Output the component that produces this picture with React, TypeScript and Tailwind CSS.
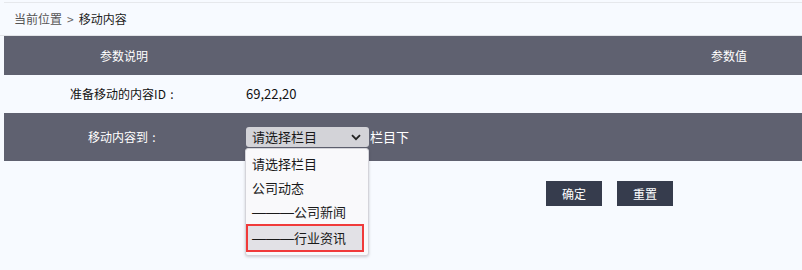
import React from "react";

const options = [
  { dash: "", label: "请选择栏目" },
  { dash: "", label: "公司动态" },
  { dash: "———", label: "公司新闻" },
  { dash: "———", label: "行业资讯" },
];

function Dash({ text }: { text: string }) {
  if (!text) return null;
  return (
    <span className="text-[14px]" style={{ fontFamily: '"Liberation Sans", sans-serif' }}>
      {text}
    </span>
  );
}

function Colon() {
  return <span className="inline-block w-[12px] text-center">:</span>;
}

function ColumnSelect() {
  return (
    <div className="relative">
      <div className="flex h-[20px] w-[123px] items-center justify-between rounded-[3px] bg-[#d3d3d8] pl-[6px] pr-[8px] text-[13px] text-[#1a1a1a]">
        <span>请选择栏目</span>
        <svg width="10" height="7" viewBox="0 0 10 7" fill="none">
          <path d="M1 1.2L5 5.2L9 1.2" stroke="#222" strokeWidth="1.8" />
        </svg>
      </div>
      {/* opened option list */}
      <div className="absolute left-[-1px] top-[21px] z-10 w-[124px] rounded-[3px] border border-[#d4d4da] bg-[#f9f9fb] py-[3px] shadow-[0_1px_3px_rgba(0,0,0,0.18)]">
        {options.map((opt, i) => (
          <div
            key={opt.label}
            className={
              i === 3
                ? "flex h-[28px] items-center border-2 border-[#f03a3a] bg-[#e2e1e6] pl-[4px] mr-[4px] text-[13px] text-[#1a1a1a]"
                : "flex h-[24px] items-center pl-[6px] text-[13px] text-[#1a1a1a]"
            }
          >
            <Dash text={opt.dash} />
            {opt.label}
          </div>
        ))}
      </div>
    </div>
  );
}

export default function App() {
  return (
    <div
      className="h-[270px] w-[802px] overflow-hidden bg-[#f7faff]"
      style={{ fontFamily: '"Noto Sans CJK SC", "Noto Sans", sans-serif' }}
    >
      <div className="mt-[2px] ml-[4px] h-px bg-[#e6e8ec]" />

      {/* Breadcrumb */}
      <div className="flex h-[33px] items-center border-b border-[#e2e4e8] pl-[14px] text-[12px]">
        <span className="text-[#555]">当前位置</span>
        <span className="mx-[5px] text-[#666]">&gt;</span>
        <span className="text-[#222]">移动内容</span>
      </div>

      <div className="ml-[4px]">
        {/* Table header */}
        <div className="flex h-[39px] items-center bg-[#5f6170] text-[12px] text-white">
          <div className="w-[240px] text-center">参数说明</div>
          <div className="flex-1" />
          <div className="w-[146px] text-center">参数值</div>
        </div>

        {/* Row: ids */}
        <div className="flex h-[38px] items-center text-[12px] text-[#111]">
          <div className="w-[240px] text-center">
            准备移动的内容ID<Colon />
          </div>
          <div className="pl-[2px] text-[13px]">69,22,20</div>
        </div>

        {/* Row: target column */}
        <div className="flex h-[48px] items-center bg-[#5f6170] text-[12px] text-white">
          <div className="w-[240px] text-center">
            移动内容到<Colon />
          </div>
          <div className="flex items-center pl-[2px]">
            <ColumnSelect />
            <span className="ml-[1px] text-[13px]">栏目下</span>
          </div>
        </div>

        {/* Actions */}
        <div className="flex gap-[15px] pl-[542px] pt-[20px]">
          <button className="h-[25px] w-[56px] bg-[#363c4d] text-[12px] text-white">确定</button>
          <button className="h-[25px] w-[56px] bg-[#363c4d] text-[12px] text-white">重置</button>
        </div>
      </div>
    </div>
  );
}
